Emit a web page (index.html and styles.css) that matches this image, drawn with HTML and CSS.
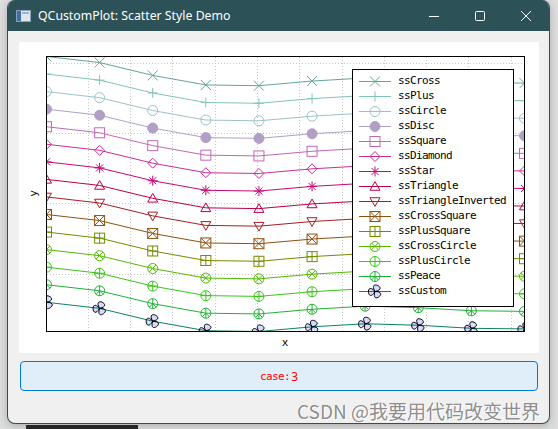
FILE: index.html
```html
<!DOCTYPE html>
<html>
<head>
<meta charset="utf-8">
<title>QCustomPlot: Scatter Style Demo</title>
<link rel="stylesheet" href="styles.css">
</head>
<body>
<div class="desk">
  <div class="window">
    <div class="titlebar">
      <svg class="app-icon" width="15" height="12" viewBox="0 0 15 12">
        <rect x="0.5" y="0.5" width="14" height="11" fill="#dfe6ee" stroke="#8aa0b8"/>
        <rect x="1" y="1" width="4" height="10" fill="#3b6fa8"/>
        <rect x="6" y="2" width="7" height="2" fill="#9fb3c8"/>
      </svg>
      <span class="title">QCustomPlot: Scatter Style Demo</span>
      <div class="controls">
        <span class="ctl"><svg width="12" height="12" viewBox="0 0 12 12"><line x1="1" y1="6.5" x2="11" y2="6.5"/></svg></span>
        <span class="ctl"><svg width="12" height="12" viewBox="0 0 12 12"><rect x="1.5" y="1.5" width="9" height="9" rx="1"/></svg></span>
        <span class="ctl"><svg width="12" height="12" viewBox="0 0 12 12"><line x1="1" y1="1" x2="11" y2="11"/><line x1="11" y1="1" x2="1" y2="11"/></svg></span>
      </div>
    </div>
    <div class="client">
      <div class="plot">
        <svg class="chart" id="chart" width="520" height="311" viewBox="0 0 520 311">
          <defs><clipPath id="axclip"><rect x="27" y="14" width="479" height="276"/></clipPath></defs>
          <g id="grid" class="grid"></g>
          <g id="graphs" clip-path="url(#axclip)"></g>
          <rect class="axisbox" x="27.5" y="14.5" width="478" height="275"/>
          <text class="axlabel" x="266" y="300">x</text>
          <text class="axlabel" transform="translate(14 151.5) rotate(-90)">y</text>
        </svg>
        <div class="legend">
          <div class="item"><svg class="ico" data-i="0"></svg><span>ssCross</span></div>
          <div class="item"><svg class="ico" data-i="1"></svg><span>ssPlus</span></div>
          <div class="item"><svg class="ico" data-i="2"></svg><span>ssCircle</span></div>
          <div class="item"><svg class="ico" data-i="3"></svg><span>ssDisc</span></div>
          <div class="item"><svg class="ico" data-i="4"></svg><span>ssSquare</span></div>
          <div class="item"><svg class="ico" data-i="5"></svg><span>ssDiamond</span></div>
          <div class="item"><svg class="ico" data-i="6"></svg><span>ssStar</span></div>
          <div class="item"><svg class="ico" data-i="7"></svg><span>ssTriangle</span></div>
          <div class="item"><svg class="ico" data-i="8"></svg><span>ssTriangleInverted</span></div>
          <div class="item"><svg class="ico" data-i="9"></svg><span>ssCrossSquare</span></div>
          <div class="item"><svg class="ico" data-i="10"></svg><span>ssPlusSquare</span></div>
          <div class="item"><svg class="ico" data-i="11"></svg><span>ssCrossCircle</span></div>
          <div class="item"><svg class="ico" data-i="12"></svg><span>ssPlusCircle</span></div>
          <div class="item"><svg class="ico" data-i="13"></svg><span>ssPeace</span></div>
          <div class="item"><svg class="ico" data-i="14"></svg><span>ssCustom</span></div>
        </div>
      </div>
      <button class="case" type="button"><span class="case-label">case:</span><span class="case-num">3</span></button>
    </div>
    <div class="watermark">CSDN @我要用代码改变世界</div>
  </div>
  <div class="taskbar-bit"></div>
</div>
<script src="script.js"></script>
</body>
</html>
```

FILE: styles.css
```css
* { box-sizing: border-box; }
html, body { margin: 0; padding: 0; }
body {
  width: 558px;
  height: 429px;
  overflow: hidden;
  background: #dedede;
  font-family: "DejaVu Sans Mono", monospace;
}
.desk {
  width: 558px;
  height: 429px;
  padding-left: 7px;
  display: flex;
  flex-direction: column;
}
.window {
  position: relative;
  width: 543px;
  height: 424px;
  flex: none;
  background: #f0f0f0;
  border: 1px solid #2c5157;
  border-top: 0;
  border-radius: 8px;
  overflow: hidden;
  display: flex;
  flex-direction: column;
  box-shadow: 0 2px 8px rgba(0, 0, 0, 0.22);
}
.titlebar {
  height: 31px;
  flex: none;
  background: #2c5157;
  display: flex;
  align-items: center;
  padding-left: 8px;
  color: #fff;
}
.app-icon { flex: none; display: block; }
.title {
  margin-left: 7px;
  font-family: "Noto Sans", "Open Sans", sans-serif;
  font-size: 12.3px;
  white-space: nowrap;
}
.controls {
  margin-left: auto;
  display: flex;
  height: 31px;
}
.ctl {
  width: 46px;
  height: 31px;
  display: flex;
  align-items: center;
  justify-content: center;
}
.ctl svg { display: block; stroke: #fff; stroke-width: 1; fill: none; }
.client {
  flex: 1;
  padding: 11px 0 0 11px;
  display: flex;
  flex-direction: column;
}
.plot {
  position: relative;
  width: 520px;
  height: 311px;
  flex: none;
  background: #fff;
}
.chart { display: block; }
.grid line {
  stroke: #c8c8c8;
  stroke-width: 1;
  stroke-dasharray: 1 2;
  shape-rendering: crispEdges;
}
.axisbox {
  fill: none;
  stroke: #000;
  stroke-width: 1;
  shape-rendering: crispEdges;
}
.axlabel {
  font-family: "DejaVu Sans Mono", monospace;
  font-size: 11px;
  fill: #000;
  text-anchor: middle;
  dominant-baseline: central;
}
.legend {
  position: absolute;
  left: 333px;
  top: 27px;
  width: 162px;
  height: 238px;
  border: 1px solid #000;
  background: #fff;
  padding: 3px 0 0 6px;
  display: flex;
  flex-direction: column;
}
.item {
  height: 15px;
  display: flex;
  align-items: center;
  gap: 7px;
  font-family: "DejaVu Sans Mono", monospace;
  font-size: 11px;
  line-height: 15px;
  letter-spacing: -0.62px;
  color: #000;
  white-space: nowrap;
}
.ico {
  width: 32px;
  height: 18px;
  flex: none;
  overflow: visible;
  display: block;
}
.case {
  margin: 8px 0 0 1px;
  width: 518px;
  height: 30px;
  flex: none;
  border: 1px solid #0078d4;
  border-radius: 4px;
  background: #e0eef9;
  color: #ff0000;
  display: flex;
  align-items: center;
  justify-content: center;
  padding: 0;
}
.case-label {
  font-family: "DejaVu Sans Mono", monospace;
  font-size: 11px;
  letter-spacing: -0.6px;
}
.case-num {
  font-family: "Noto Sans", sans-serif;
  font-size: 12px;
  margin-left: 1px;
}
.watermark {
  position: absolute;
  right: 9px;
  bottom: 0;
  font-family: "Noto Sans CJK SC", sans-serif;
  font-size: 19px;
  line-height: 24px;
  color: #8e8e8e;
  text-shadow: 1px 1px 0 #ffffff, -1px 0 0 rgba(255,255,255,0.6);
  white-space: nowrap;
}
.taskbar-bit {
  margin: 1px 0 0 19px;
  width: 112px;
  height: 4px;
  flex: none;
  background: #2b2b2b;
}
```

FILE: script.js
```js
(function () {
  var shapes = ['cross', 'plus', 'circle', 'disc', 'square', 'diamond', 'star', 'triangle',
    'triangleInverted', 'crossSquare', 'plusSquare', 'crossCircle', 'plusCircle', 'peace', 'custom'];
  var N = shapes.length;

  function col(i) {
    var r = Math.trunc(Math.sin(i * 0.3) * 100 + 100);
    var g = Math.trunc(Math.sin(i * 0.6 + 0.7) * 100 + 100);
    var b = Math.trunc(Math.sin(i * 0.4 + 0.6) * 100 + 100);
    return 'rgb(' + r + ',' + g + ',' + b + ')';
  }
  function f(n) { return Math.round(n * 100) / 100; }
  function ln(a, b, c, d) {
    return '<line x1="' + f(a) + '" y1="' + f(b) + '" x2="' + f(c) + '" y2="' + f(d) + '"/>';
  }
  function circ(x, y, w) { return '<circle cx="' + f(x) + '" cy="' + f(y) + '" r="' + w + '"/>'; }
  function sq(x, y, w) {
    return '<rect x="' + f(x - w) + '" y="' + f(y - w) + '" width="' + 2 * w + '" height="' + 2 * w + '"/>';
  }
  function poly(pts) {
    return '<polygon points="' + pts.map(function (p) { return f(p[0]) + ',' + f(p[1]); }).join(' ') + '"/>';
  }
  var CUSTOM = 'M0 0C9 0 -2.781 8.56 0 0C-4.5 7.794 -6.022 -6.688 0 0C-4.5 -7.794 8.803 -1.871 0 0Z';

  function marker(s, x, y, c) {
    var w = 5, q = w * 0.707;
    switch (s) {
      case 'cross': return ln(x - w, y - w, x + w, y + w) + ln(x - w, y + w, x + w, y - w);
      case 'plus': return ln(x - w, y, x + w, y) + ln(x, y + w, x, y - w);
      case 'circle': return circ(x, y, w);
      case 'disc': return '<circle cx="' + f(x) + '" cy="' + f(y) + '" r="5" fill="' + c + '"/>';
      case 'square': return sq(x, y, w);
      case 'diamond': return poly([[x - w, y], [x, y - w], [x + w, y], [x, y + w]]);
      case 'star': return ln(x - w, y, x + w, y) + ln(x, y + w, x, y - w) +
        ln(x - q, y - q, x + q, y + q) + ln(x - q, y + q, x + q, y - q);
      case 'triangle': return poly([[x - w, y + 0.755 * w], [x + w, y + 0.755 * w], [x, y - 0.977 * w]]);
      case 'triangleInverted': return poly([[x - w, y - 0.755 * w], [x + w, y - 0.755 * w], [x, y + 0.977 * w]]);
      case 'crossSquare': return sq(x, y, w) + ln(x - w, y - w, x + w * 0.95, y + w * 0.95) +
        ln(x - w, y + w * 0.95, x + w * 0.95, y - w);
      case 'plusSquare': return sq(x, y, w) + ln(x - w, y, x + w * 0.95, y) + ln(x, y + w, x, y - w);
      case 'crossCircle': return circ(x, y, w) + ln(x - q, y - q, x + w * 0.67, y + w * 0.67) +
        ln(x - q, y + w * 0.67, x + w * 0.67, y - q);
      case 'plusCircle': return circ(x, y, w) + ln(x - w, y, x + w, y) + ln(x, y + w, x, y - w);
      case 'peace': return circ(x, y, w) + ln(x, y - w, x, y + w) + ln(x, y, x - q, y + q) + ln(x, y, x + q, y + q);
      case 'custom': return '<path transform="translate(' + f(x) + ' ' + f(y) + ') scale(1.6667)" d="' + CUSTOM +
        '" stroke="#000" vector-effect="non-scaling-stroke" fill="rgba(40,70,255,0.196)" fill-rule="evenodd"/>';
    }
    return '';
  }

  var data = [], ymin = Infinity, ymax = -Infinity;
  for (var i = 0; i < N; i++) {
    var row = [];
    for (var k = 0; k < 10; k++) {
      var x = k / 10 * 4 * 3.14 + 0.01;
      var y = 7 * Math.sin(x) / x + (N - i) * 5;
      row.push([x, y]);
      if (y < ymin) ymin = y;
      if (y > ymax) ymax = y;
    }
    data.push(row);
  }
  var xmin = 0.01, xmax = 0.9 * 4 * 3.14 + 0.01;
  var X0 = 27.5, W = 478, Y1 = 289.5, H = 275;
  function px(v) { return X0 + (v - xmin) / (xmax - xmin) * W; }
  function py(v) { return Y1 - (v - ymin) / (ymax - ymin) * H; }

  var grid = '';
  for (var t = 1; t <= 11; t++) {
    var gx = Math.floor(px(t)) + 0.5;
    grid += ln(gx, 15, gx, 289);
  }
  [20, 40, 60, 80].forEach(function (v) {
    var gy = Math.floor(py(v)) + 0.5;
    grid += ln(28, gy, 505, gy);
  });
  document.getElementById('grid').innerHTML = grid;

  var out = '';
  for (var g = 0; g < N; g++) {
    var c = col(g);
    var pts = data[g].map(function (p) { return f(px(p[0])) + ',' + f(py(p[1])); }).join(' ');
    out += '<g stroke="' + c + '" fill="none" stroke-width="1"><polyline points="' + pts + '"/>';
    for (var m = 0; m < 10; m++) {
      out += marker(shapes[g], px(data[g][m][0]), py(data[g][m][1]), c);
    }
    out += '</g>';
  }
  document.getElementById('graphs').innerHTML = out;

  var icons = document.querySelectorAll('.ico');
  for (var j = 0; j < icons.length; j++) {
    var idx = +icons[j].getAttribute('data-i');
    var cc = col(idx);
    icons[j].setAttribute('viewBox', '0 0 32 18');
    icons[j].innerHTML = '<g stroke="' + cc + '" fill="none" stroke-width="1">' + ln(0, 9.5, 32, 9.5) +
      marker(shapes[idx], 16, 9.5, cc) + '</g>';
  }
})();
```
